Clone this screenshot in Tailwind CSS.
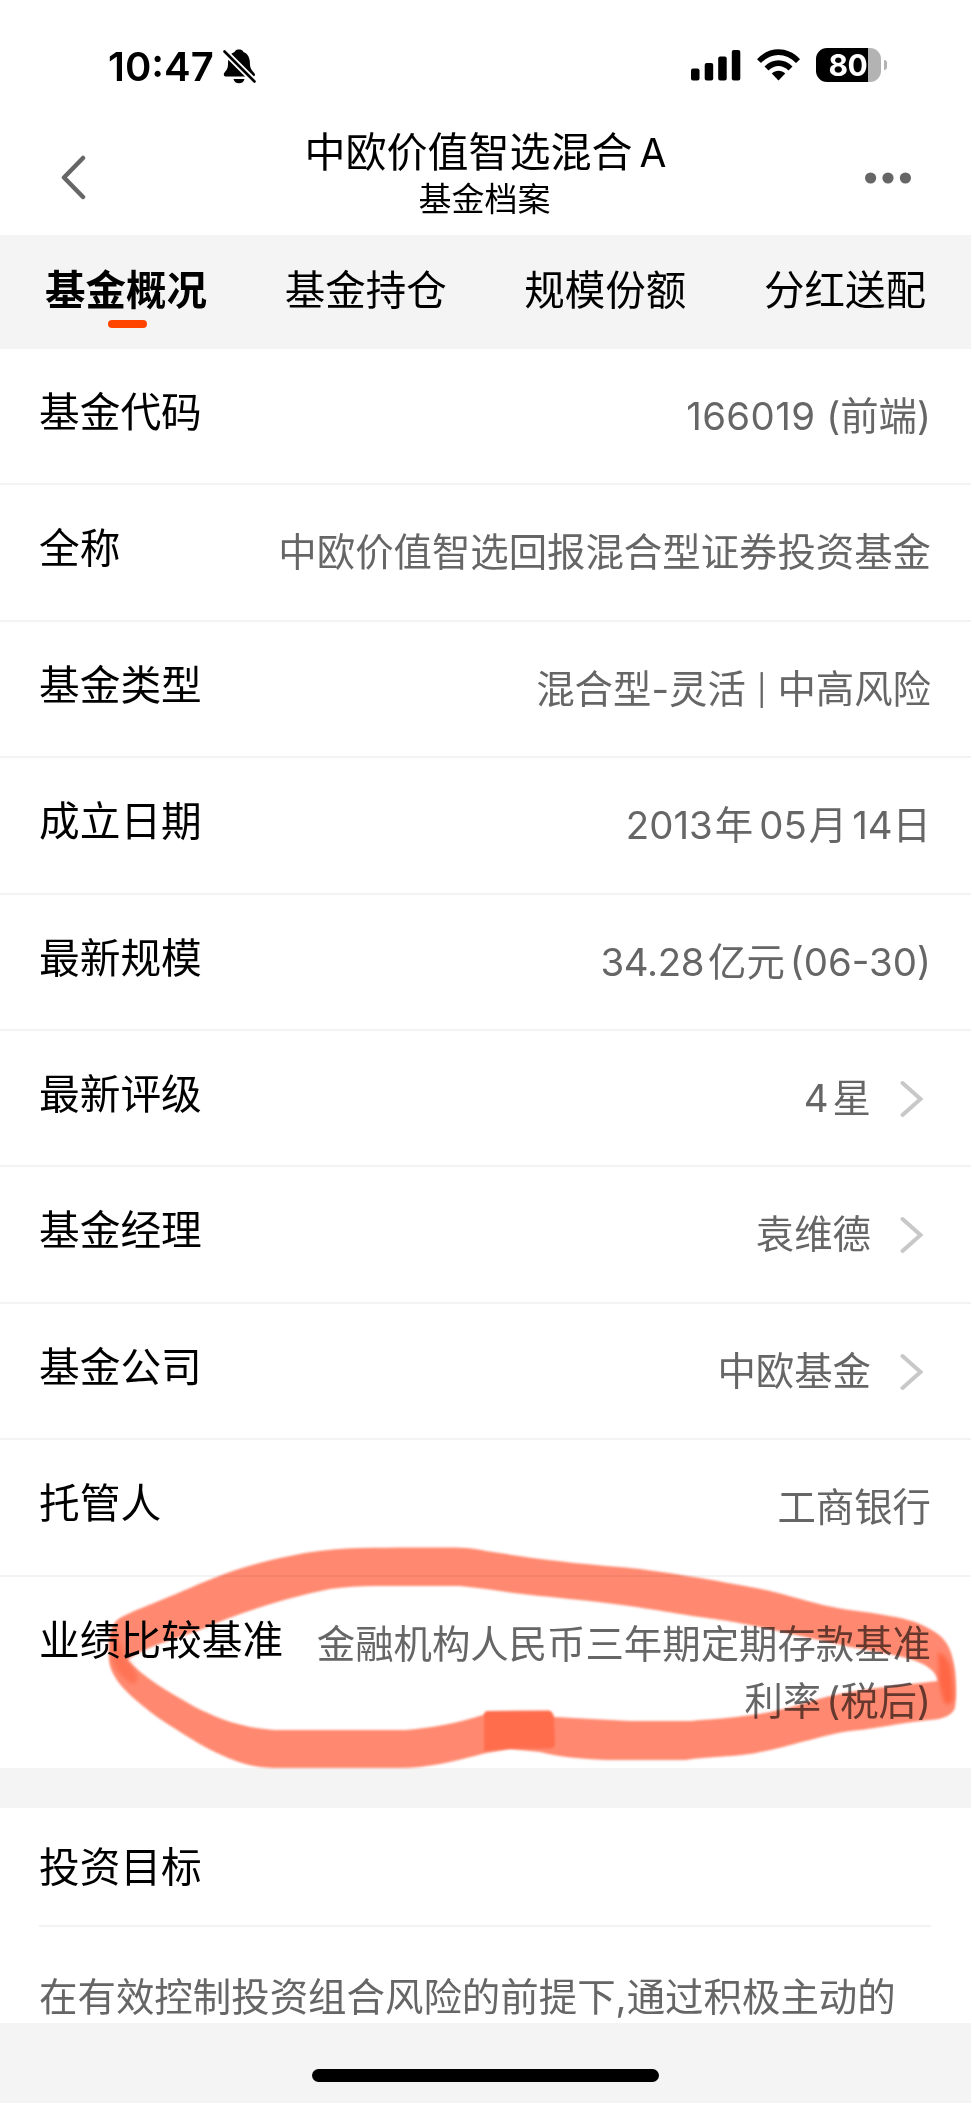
<!DOCTYPE html>
<html lang="zh-CN">
<head>
<meta charset="utf-8">
<title>基金档案</title>
<script src="https://cdn.jsdelivr.net/npm/@tailwindcss/browser@4"></script>
</head>
<body class="bg-white">
<div class="relative flex h-[2104px] w-[972px] flex-col overflow-hidden border-r border-b border-white bg-[#f4f4f4] font-['Inter','Noto_Sans_CJK_SC',sans-serif] text-black">

  <!-- status bar -->
  <div class="flex h-[110px] shrink-0 items-start justify-between bg-white pr-[84px] pl-[108px]">
    <div class="flex items-start gap-[9px] pt-[43px]">
      <span class="w-[106px] text-[40px] leading-[48px] font-semibold whitespace-nowrap">10:47</span>
      <svg class="mt-[6px] h-[35px] w-[33px]" viewBox="0 0 33 35">
        <path d="M.8 25.500c0-2.500 4.200-4 4.200-10C5 8 7.500 4.500 11.500 3 12.500 1 14 .5 16 .5s3.500.5 4.500 2.500C24.500 4.500 27 8 27 15.500c0 6 5 8 5 10 0 1.200-.7 2-2 2H2.500c-1 0-1.700-.8-1.700-2z" fill="#000"/>
        <path d="M10.500 30h11c-.5 2.800-2.700 4.300-5.500 4.300s-5-1.500-5.500-4.300z" fill="#000"/>
        <path d="M1.500 2.500L31.500 32.500" stroke="#fff" stroke-width="6.400"/>
        <path d="M1.500 2.500L31.500 32.500" stroke="#000" stroke-width="2.600" stroke-linecap="round"/>
      </svg>
    </div>
    <div class="flex items-start gap-[16px] pt-[48px]">
      <svg class="mt-[2px] h-[31px] w-[50px]" viewBox="0 0 50 31">
        <rect x="0" y="18.500" width="8.500" height="12" rx="2"/><rect x="13.700" y="13" width="8.500" height="17.500" rx="2"/><rect x="27.200" y="6.500" width="8.500" height="24" rx="2"/><rect x="40.800" y="0" width="8.500" height="30.500" rx="2"/>
      </svg>
      <svg class="mt-px h-[32px] w-[43px]" viewBox="0 0 43 32">
        <path d="M0 10.200C12-3 31-3 43 10.200L39 14C29 3.200 14 3.200 4 14z"/>
        <path d="M7.500 17.500C15.500 9 27.500 9 35.500 17.500L31.500 21.500C25.500 15.500 17.500 15.500 11.500 21.500z"/>
        <path d="M14.800 24.500C18.500 20.800 24.500 20.800 28.200 24.500L21.500 31.500z"/>
      </svg>
      <div class="flex items-center gap-[3px]">
        <div class="flex h-[34px] w-[65px] items-center overflow-hidden rounded-[11px] bg-[linear-gradient(90deg,#000_52px,#b3b3b3_52px)] pl-[12.500px] text-[30px] leading-[34px] font-bold tracking-[-0.500px] text-white">80</div>
        <div class="h-[10px] w-[3px] rounded-r-full bg-[#b3b3b3]"></div>
      </div>
    </div>
  </div>

  <!-- title bar -->
  <div class="flex h-[125px] shrink-0 items-start justify-between bg-white pr-[60px] pl-[60px]">
    <svg class="mt-[45px] h-[45px] w-[46px]" viewBox="0 0 46 45"><path d="M23 3L4 22.500L23 42" fill="none" stroke="#666" stroke-width="4.500" stroke-linecap="round" stroke-linejoin="round"/></svg>
    <div class="flex flex-col items-center pt-[14px]">
      <div class="text-[41px] leading-[56px] whitespace-nowrap">中欧价值智选混合<span class="ml-[7px] text-[39px]">A</span></div>
      <div class="-mt-[2px] mr-[2px] text-[33px] leading-[40px]">基金档案</div>
    </div>
    <svg class="mt-[62px] h-[12px] w-[46px]" viewBox="0 0 46 12"><g fill="#666"><circle cx="5.600" cy="6" r="5.600"/><circle cx="23" cy="6" r="5.600"/><circle cx="40.400" cy="6" r="5.600"/></g></svg>
  </div>

  <!-- tabs -->
  <div class="flex h-[114px] shrink-0 justify-between px-[45px] pt-[27px] text-[40.500px] leading-[57px]">
    <div class="flex flex-col items-center gap-px"><span class="font-bold">基金概况</span><span class="ml-[2px] h-[8px] w-[39px] rounded-full bg-[#ff4400]"></span></div>
    <div>基金持仓</div>
    <div>规模份额</div>
    <div>分红送配</div>
  </div>

  <!-- fund facts -->
  <div class="flex h-[1419px] shrink-0 flex-col bg-white text-[38.400px] leading-[57.500px] text-[#666]">
    <div class="flex h-[136.400px] shrink-0 justify-between border-b-2 border-[#f3f3f3] pr-[40px] pl-[39px] pt-[39px]"><span class="-mt-[4px] text-[40.700px] text-black">基金代码</span><span><span class="tracking-[0.400px]">166019</span> (前端)</span></div>
    <div class="flex h-[136.400px] shrink-0 justify-between border-b-2 border-[#f3f3f3] pr-[40px] pl-[39px] pt-[39px]"><span class="-mt-[4px] text-[40.700px] text-black">全称</span><span>中欧价值智选回报混合型证券投资基金</span></div>
    <div class="flex h-[136.400px] shrink-0 justify-between border-b-2 border-[#f3f3f3] pr-[40px] pl-[39px] pt-[39px]"><span class="-mt-[4px] text-[40.700px] text-black">基金类型</span><span>混合型-灵活 <span class="inline-block -translate-y-[2px] text-[30px] leading-none">|</span> 中高风险</span></div>
    <div class="flex h-[136.400px] shrink-0 justify-between border-b-2 border-[#f3f3f3] pr-[40px] pl-[39px] pt-[39px]"><span class="-mt-[4px] text-[40.700px] text-black">成立日期</span><span>2013<span class="mr-[6px] ml-[2px]">年</span>05<span class="mr-[5px] ml-[2px]">月</span>14日</span></div>
    <div class="flex h-[136.400px] shrink-0 justify-between border-b-2 border-[#f3f3f3] pr-[40px] pl-[39px] pt-[39px]"><span class="-mt-[4px] text-[40.700px] text-black">最新规模</span><span><span class="tracking-[-0.400px]">34.28</span><span class="mr-[5px] ml-[4px]">亿元</span>(06-30)</span></div>
    <div class="flex h-[136.400px] shrink-0 justify-between border-b-2 border-[#f3f3f3] pr-[40px] pl-[39px] pt-[39px]"><span class="-mt-[4px] text-[40.700px] text-black">最新评级</span><span class="flex gap-[28px]"><span>4<span class="ml-[4px]">星</span></span><svg class="mt-[10px] mr-[8px] h-[38px] w-[24px]" viewBox="0 0 24 38"><path d="M3.500 3L21.500 19L3.500 35" fill="none" stroke="#c8c8c8" stroke-width="4" stroke-linecap="round"/></svg></span></div>
    <div class="flex h-[136.400px] shrink-0 justify-between border-b-2 border-[#f3f3f3] pr-[40px] pl-[39px] pt-[39px]"><span class="-mt-[4px] text-[40.700px] text-black">基金经理</span><span class="flex gap-[28px]"><span>袁维德</span><svg class="mt-[10px] mr-[8px] h-[38px] w-[24px]" viewBox="0 0 24 38"><path d="M3.500 3L21.500 19L3.500 35" fill="none" stroke="#c8c8c8" stroke-width="4" stroke-linecap="round"/></svg></span></div>
    <div class="flex h-[136.400px] shrink-0 justify-between border-b-2 border-[#f3f3f3] pr-[40px] pl-[39px] pt-[39px]"><span class="-mt-[4px] text-[40.700px] text-black">基金公司</span><span class="flex gap-[28px]"><span>中欧基金</span><svg class="mt-[10px] mr-[8px] h-[38px] w-[24px]" viewBox="0 0 24 38"><path d="M3.500 3L21.500 19L3.500 35" fill="none" stroke="#c8c8c8" stroke-width="4" stroke-linecap="round"/></svg></span></div>
    <div class="flex h-[136.400px] shrink-0 justify-between border-b-2 border-[#f3f3f3] pr-[40px] pl-[39px] pt-[39px]"><span class="-mt-[4px] text-[40.700px] text-black">托管人</span><span>工商银行</span></div>
    <div class="flex flex-1 justify-between pr-[40px] pl-[39px] pt-[39px]"><span class="-mt-[4px] text-[40.700px] whitespace-nowrap text-black">业绩比较基准</span><span class="text-right whitespace-nowrap">金融机构人民币三年期定期存款基准<br>利率<span class="ml-[5px]">(税后)</span></span></div>
  </div>

  <!-- investment goal -->
  <div class="mt-[40px] flex h-[215px] shrink-0 flex-col bg-white pr-[40px] pl-[39px]">
    <div class="h-[119px] shrink-0 border-b-2 border-[#f3f3f3] pt-[31px] text-[40.700px] leading-[57px]">投资目标</div>
    <div class="pt-[42px] text-[38.450px] leading-[57px] whitespace-nowrap text-[#666]">在有效控制投资组合风险的前提下,通过积极主动的</div>
  </div>

  <!-- home indicator -->
  <div class="mt-[46px] h-[13px] w-[347px] shrink-0 self-center rounded-full bg-black"></div>

  <!-- highlighter mark -->
  <svg class="absolute top-[1530px] left-[90px] h-[260px] w-[882px] mix-blend-multiply" viewBox="90 1530 882 260">
    <defs>
      <filter id="soft" x="-5%" y="-5%" width="110%" height="110%"><feGaussianBlur stdDeviation="0.9"/></filter>
      <filter id="softer" x="-20%" y="-20%" width="140%" height="140%"><feGaussianBlur stdDeviation="2"/></filter>
    </defs>
    <path filter="url(#soft)" fill="#ff8970" fill-rule="evenodd" d="M109 1660C108 1640 110 1623 120 1618C130 1612 150 1605 190 1588C225 1572 255 1563 290 1556C330 1547 365 1548 400 1547.500H455C470 1548 478 1549 486 1551C530 1558 570 1563 619 1567C650 1569 720 1581 766 1590C800 1598 820 1606 850 1610C880 1614 900 1617 915 1622C945 1634 951 1644 955 1670C957 1690 956 1700 955 1708C952 1715 945 1719 930 1720C900 1723 885 1727 860 1730C830 1732 790 1747 760 1752C740 1757 700 1757 686 1760H606C580 1759 560 1757 540 1752L510 1749L486 1753C455 1761 430 1768 400 1768H275C235 1768 200 1745 160 1719C130 1697 111 1680 109 1660ZM127 1660C150 1645 170 1641 200 1630C240 1612 290 1597 330 1589C345 1587 360 1586 375 1586H460L486 1589C520 1594 540 1596 580 1600C630 1605 660 1611 700 1617C730 1621 740 1623 760 1627L850 1647C880 1652 895 1655 910 1659C930 1665 937 1674 938 1681C920 1683 890 1686 862 1690C820 1696 800 1706 770 1712C730 1719 710 1719 690 1721H630L555 1717L486 1714C455 1724 430 1728 405 1730H275C240 1728 215 1717 195 1707C165 1690 145 1678 127 1660Z"/>
    <path filter="url(#soft)" fill="#ff6d4d" d="M484 1715Q484 1711 488 1711L549 1710.500Q553 1711 554 1718L555 1744Q555 1748.500 549 1748.500H510L484 1751Z"/>
    <path filter="url(#softer)" fill="#ff6644" d="M938 1652Q948 1656 951 1668Q954 1690 953 1700Q950 1706 945 1704Q941 1695 939 1680Z"/>
    <path filter="url(#softer)" fill="#ff7354" d="M113 1630Q121 1640 125 1656L136 1672Q140 1684 132 1684Q115 1674 112 1658Q110 1640 113 1630Z"/>
  </svg>
</div>
</body>
</html>
